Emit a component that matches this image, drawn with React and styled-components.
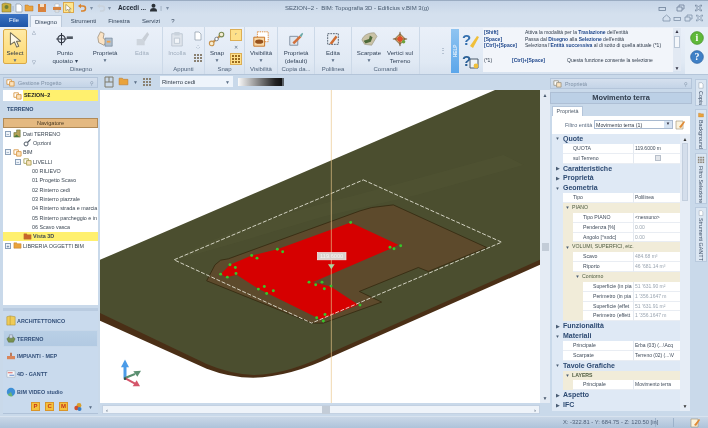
import React from 'react';
import styled, { createGlobalStyle } from 'styled-components';

const GlobalStyle = createGlobalStyle`
  html, body { margin: 0; padding: 0; background: #c9d9ea; }
`;

const sans = '"Liberation Sans", Arial, sans-serif';

const Root = styled.div`
  width: 708px;
  height: 428px;
  overflow: hidden;
  display: flex;
  flex-direction: column;
  background: #c9d9ea;
  color: #33455c;
  font-family: ${sans};
  filter: blur(0.3px);
`;

/* ---------- title bar ---------- */
const TitleBar = styled.div`
  height: 14px;
  flex: none;
  display: flex;
  align-items: center;
  background: linear-gradient(#c6d5e7, #d4e0ee);
  border-top: 1px solid #9aacc2;
  box-sizing: border-box;
`;
const QuickAccess = styled.div`
  width: 285px;
  flex: none;
  display: flex;
  align-items: center;
  padding-left: 1px;
  box-sizing: border-box;
`;
const QuickSlot = styled.span`
  width: ${({ $w }) => $w || 10}px;
  margin-left: ${({ $ml }) => $ml || 0}px;
  height: 11px;
  flex: none;
  display: flex;
  align-items: center;
  justify-content: center;
  font-size: 6px;
  color: #7d8fa5;
  background: ${({ $on }) => ($on ? '#ffe68e' : 'transparent')};
  border: ${({ $on }) => ($on ? '1px solid #dca94c' : 'none')};
  box-sizing: border-box;
`;
const AccountName = styled.span`
  width: 30px;
  flex: none;
  font-size: 6.4px;
  font-weight: 700;
  color: #1b2430;
  margin-left: 6px;
  white-space: nowrap;
`;
const WindowTitle = styled.div`
  width: 139px;
  flex: none;
  font-size: 6px;
  color: #46596f;
  white-space: pre;
`;
const WindowButtons = styled.div`
  margin-left: auto;
  display: flex;
  gap: 9px;
  padding-right: 5px;
  color: #6f8299;
`;

/* ---------- tabs ---------- */
const TabRow = styled.div`
  height: 13px;
  flex: none;
  display: flex;
  align-items: flex-end;
  background: #d4e0ee;
`;
const FileTab = styled.div`
  width: 28px;
  height: 13px;
  background: linear-gradient(#3a73c4, #1f55a6);
  color: #f4f8ff;
  font-size: 6.2px;
  line-height: 12px;
  text-align: center;
  margin-right: 2px;
`;
const Tab = styled.div`
  width: ${({ $w }) => $w}px;
  height: 12px;
  line-height: 12px;
  font-size: 6px;
  text-align: center;
  color: #33445a;
  background: ${({ $active }) => ($active ? '#eef3fa' : 'transparent')};
  border: ${({ $active }) => ($active ? '1px solid #bccadb' : 'none')};
  border-bottom: none;
  box-sizing: border-box;
`;
const TabTools = styled.div`
  margin-left: auto;
  align-self: flex-start;
  display: flex;
  gap: 2px;
  padding-right: 4px;
  color: #7f92a8;
`;

/* ---------- ribbon ---------- */
const Ribbon = styled.div`
  height: 48px;
  flex: none;
  display: flex;
  background: linear-gradient(#eaf0f9, #e0e9f4 75%, #d7e2ef);
  border-bottom: 1px solid #b4c5d9;
  box-sizing: border-box;
`;
const Group = styled.div`
  width: ${({ $w }) => $w}px;
  flex: none;
  display: flex;
  flex-direction: column;
  border-right: 1px solid #ccd9e8;
  box-sizing: border-box;
`;
const GroupBody = styled.div`
  height: 38px;
  flex: none;
  display: flex;
  align-items: flex-start;
  padding-top: 2px;
  box-sizing: border-box;
`;
const GroupLabel = styled.div`
  height: 9px;
  line-height: 9px;
  font-size: 6px;
  text-align: center;
  color: #4f6279;
  white-space: nowrap;
`;
const RibbonButton = styled.div`
  width: ${({ $w }) => $w}px;
  flex: none;
  display: flex;
  flex-direction: column;
  align-items: center;
  font-size: 6.1px;
  line-height: 8px;
  text-align: center;
  color: ${({ $off }) => ($off ? '#9fadbd' : '#33445a')};
  white-space: nowrap;
  box-sizing: border-box;
`;
const IconBox = styled.div`
  height: ${({ $h }) => $h || 20}px;
  flex: none;
  display: flex;
  align-items: center;
  justify-content: center;
`;
const SelectButton = styled(RibbonButton)`
  height: 35px;
  margin-left: 3px;
  background: linear-gradient(#ffeaa5, #fdd870);
  border: 1px solid #d9a948;
  border-radius: 2px;
  color: #2a3444;
`;
const Caret = styled.span`
  font-size: 5px;
  line-height: 6px;
  color: #5b6f87;
`;
const SmallColumn = styled.div`
  width: ${({ $w }) => $w}px;
  flex: none;
  height: 36px;
  display: flex;
  flex-direction: column;
  align-items: center;
  justify-content: ${({ $spread }) => ($spread ? 'space-between' : 'space-around')};
`;
const ToggleButton = styled.span`
  width: 12px;
  height: 12px;
  display: flex;
  align-items: center;
  justify-content: center;
  background: ${({ $on }) => ($on ? '#fee08a' : 'transparent')};
  border: 1px solid ${({ $on }) => ($on ? '#dcae55' : 'transparent')};
  box-sizing: border-box;
`;
const RibbonGap = styled.div`
  width: 31px;
  flex: none;
  display: flex;
  align-items: center;
  justify-content: flex-end;
  padding-right: 4px;
  box-sizing: border-box;
  color: #7d8fa5;
  font-size: 8px;
`;
const HelpStrip = styled.div`
  width: 8px;
  flex: none;
  margin: 2px 0 1px;
  background: linear-gradient(#5ba6ea, #8fc4f1);
  color: #dcecfb;
  font-size: 4.6px;
  font-weight: 700;
  writing-mode: vertical-rl;
  transform: rotate(180deg);
  display: flex;
  align-items: center;
  justify-content: center;
`;
const HelpIcons = styled.div`
  width: 24px;
  flex: none;
  display: flex;
  flex-direction: column;
  align-items: center;
  justify-content: space-around;
  padding: 3px 0;
  box-sizing: border-box;
`;
const HelpBox = styled.div`
  width: 190px;
  flex: none;
  margin-top: 1px;
  height: 44px;
  overflow: hidden;
  background: #f2f5fa;
  font-size: 5px;
  line-height: 6.5px;
  color: #2f3b4b;
  padding: 1px 0 0 1px;
  box-sizing: border-box;
`;
const HelpRow = styled.div`
  display: grid;
  grid-template-columns: ${({ $wide }) => ($wide ? '28px 55px 1fr' : '41px 1fr')};
  margin-bottom: ${({ $gap }) => $gap || 0}px;
`;
const Key = styled.b`
  color: #20488c;
  white-space: nowrap;
`;
const HelpScroll = styled.div`
  width: 8px;
  flex: none;
  margin: 1px 0 3px;
  background: #e2e9f3;
  display: flex;
  flex-direction: column;
  align-items: center;
  justify-content: space-between;
  font-size: 5px;
  color: #334;
`;
const HelpThumb = styled.span`
  width: 6px;
  height: 12px;
  background: #f4f7fb;
  border: 1px solid #b9c6d6;
  box-sizing: border-box;
  margin-bottom: auto;
  margin-top: 2px;
`;
const InfoPanel = styled.div`
  flex: 1;
  display: flex;
  flex-direction: column;
  align-items: center;
  gap: 5px;
  padding-top: 4px;
  margin-left: 4px;
  background: #e9f0f8;
`;

/* ---------- workspace ---------- */
const Workspace = styled.div`
  flex: 1;
  min-height: 0;
  display: flex;
`;
const LeftPanel = styled.div`
  width: 100px;
  flex: none;
  display: flex;
  flex-direction: column;
  padding: 2px 2px 2px 3px;
  box-sizing: border-box;
`;
const DockHeader = styled.div`
  height: 11px;
  flex: none;
  display: flex;
  align-items: center;
  gap: 3px;
  font-size: 5.4px;
  color: #7e90a5;
  background: linear-gradient(#d5e0ee, #c4d4e7);
  border: 1px solid #b4c5da;
  box-sizing: border-box;
  padding: 0 3px 0 2px;
  span:last-child { margin-left: auto; }
`;
const ProjectRow = styled.div`
  height: 11px;
  margin-top: 2px;
  flex: none;
  display: flex;
  background: #ffffff;
`;
const ProjectIcon = styled.div`
  width: 20px;
  display: flex;
  justify-content: flex-end;
  align-items: center;
  padding-right: 1px;
  box-sizing: border-box;
`;
const ProjectName = styled.div`
  flex: 1;
  background: #fff06e;
  font-size: 5.4px;
  font-weight: 700;
  line-height: 11px;
  color: #222;
  padding-left: 1px;
`;
const ModeTitle = styled.div`
  height: 17px;
  flex: none;
  line-height: 17px;
  padding-left: 4px;
  font-size: 5.4px;
  font-weight: 700;
  color: #2e4a70;
`;
const NavigatorBar = styled.div`
  height: 10px;
  flex: none;
  line-height: 9px;
  text-align: center;
  font-size: 5.6px;
  color: #4a3a22;
  background: #e4b981;
  border: 1px solid #b08a58;
  box-sizing: border-box;
`;
const Tree = styled.div`
  height: 177px;
  flex: none;
  background: #ffffff;
  padding-top: 1px;
  box-sizing: border-box;
  overflow: hidden;
`;
const TreeRow = styled.div`
  height: 9.33px;
  display: flex;
  align-items: center;
  gap: 1px;
  padding-left: ${({ $indent }) => $indent}px;
  font-size: 5.4px;
  white-space: nowrap;
  color: #3d4854;
  background: ${({ $selected }) => ($selected ? '#fff06e' : 'transparent')};
  font-weight: ${({ $selected }) => ($selected ? 700 : 400)};
  svg { flex: none; }
`;
const Expander = styled.span`
  width: 6px;
  height: 6px;
  flex: none;
  margin-right: 1px;
  border: 1px solid #8ba0b8;
  background: #eef3f9;
  box-sizing: border-box;
  font-size: 5px;
  line-height: 4px;
  text-align: center;
  color: #3c5a80;
`;
const ModuleList = styled.div`
  flex: 1;
  margin-top: 3px;
  border-top: 3px solid #b9cbe0;
  border-bottom: 1px solid #b0c2d8;
  background: #c9daed;
  display: flex;
  flex-direction: column;
  padding-top: 1px;
  box-sizing: border-box;
`;
const ModuleRow = styled.div`
  height: 17.7px;
  flex: none;
  display: flex;
  align-items: center;
  gap: 1px;
  padding-left: 3px;
  font-size: 5.4px;
  font-weight: 700;
  color: #33507a;
  white-space: nowrap;
  background: ${({ $active }) => ($active ? 'linear-gradient(#bad0e6, #b1c9e2)' : 'transparent')};
  box-shadow: ${({ $active }) => ($active ? 'inset 0 0 0 1px #c7d8ea' : 'none')};
`;
const ModuleTools = styled.div`
  flex: 1;
  display: flex;
  align-items: center;
  justify-content: flex-end;
  gap: 5px;
  padding-right: 5px;
`;
const MiniBadge = styled.span`
  width: 9px;
  height: 9px;
  background: #f3c13c;
  border: 1px solid #d9952a;
  box-sizing: border-box;
  color: #c5341c;
  font-size: 6px;
  font-weight: 700;
  line-height: 7px;
  text-align: center;
`;

/* ---------- centre ---------- */
const CenterColumn = styled.div`
  width: 450px;
  flex: none;
  display: flex;
  flex-direction: column;
`;
const ViewToolbar = styled.div`
  height: 15px;
  flex: none;
  display: flex;
  align-items: center;
  padding: 0 0 2px 4px;
  box-sizing: border-box;
  gap: 4px;
  background: #c9d9ea;
`;
const LayerCombo = styled.div`
  width: 73px;
  height: 11px;
  margin-left: 4px;
  flex: none;
  display: flex;
  align-items: center;
  justify-content: space-between;
  padding: 0 3px 0 2px;
  box-sizing: border-box;
  background: #eef4fb;
  font-size: 5.9px;
  color: #2f3a48;
`;
const Shade = styled.div`
  width: 44px;
  height: 8px;
  margin-left: 1px;
  flex: none;
  background: linear-gradient(90deg, #fafafa, #b0b0b0 30%, #222 85%, #111);
  border-right: 2px solid #5a6066;
`;
const ViewRow = styled.div`
  height: 313px;
  flex: none;
  display: flex;
`;
const Viewport = styled.div`
  width: 440px;
  flex: none;
  background: #ffffff;
  svg { display: block; }
`;
const VScroll = styled.div`
  flex: 1;
  background: #e4ebf4;
  display: flex;
  flex-direction: column;
  align-items: center;
  justify-content: space-between;
  font-size: 5px;
  color: #46576b;
  padding: 2px 0;
  box-sizing: border-box;
`;
const ScrollThumb = styled.span`
  width: 7px;
  height: 8px;
  background: #c3ccd7;
`;
const HScrollTrack = styled.div`
  height: 13px;
  flex: none;
  padding: 2px 10px 2px 2px;
  box-sizing: border-box;
`;
const HScroll = styled.div`
  height: 100%;
  background: #eef3f9;
  border: 1px solid #c3d1e2;
  box-sizing: border-box;
  display: flex;
  align-items: center;
  justify-content: space-between;
  padding: 0 3px;
  font-size: 6px;
  color: #46576b;
`;
const HThumb = styled.span`
  width: 8px;
  height: 8px;
  background: #c3ccd7;
  margin-left: 10px;
`;

/* ---------- properties ---------- */
const RightPanel = styled.div`
  width: 142px;
  flex: none;
  display: flex;
  flex-direction: column;
  padding-top: 3px;
  box-sizing: border-box;
`;
const PanelTitle = styled.div`
  height: 12px;
  margin: 3px 0 2px;
  flex: none;
  text-align: center;
  font-size: 7.4px;
  font-weight: 700;
  color: #2f3b4b;
  background: #bcd0e6;
  border: 1px solid #aebfd5;
  box-sizing: border-box;
  line-height: 10px;
`;
const PropTab = styled.div`
  width: 31px;
  height: 10px;
  flex: none;
  margin-left: 2px;
  background: #ffffff;
  border: 1px solid #b4c5da;
  border-bottom: none;
  box-sizing: border-box;
  font-size: 5.4px;
  line-height: 9px;
  text-align: center;
  color: #4f5c6b;
`;
const FilterRow = styled.div`
  height: 18px;
  flex: none;
  margin: 0 2px;
  background: #ffffff;
  display: flex;
  align-items: center;
  font-size: 5.5px;
  color: #5a6b80;
  padding: 0 0 1px 13px;
  box-sizing: border-box;
  gap: 2px;
  white-space: nowrap;
`;
const FilterLabel = styled.span`
  width: 27px;
  flex: none;
`;
const FilterCombo = styled.div`
  width: 79px;
  height: 9px;
  flex: none;
  display: flex;
  align-items: center;
  justify-content: space-between;
  border: 1px solid #a9bad0;
  box-sizing: border-box;
  font-size: 5.3px;
  color: #2f3a48;
  padding-left: 1px;
`;
const ComboArrow = styled.span`
  width: 8px;
  height: 7px;
  background: #d6e3f2;
  color: #334;
  text-align: center;
  font-size: 4.5px;
  line-height: 6px;
`;
const GridWrap = styled.div`
  height: 277px;
  flex: none;
  margin: 0 2px;
  display: flex;
  background: #dfe9f5;
`;
const PropGrid = styled.div`
  width: 128px;
  flex: none;
`;
const GridRow = styled.div`
  height: 9.87px;
  display: flex;
  align-items: stretch;
  overflow: hidden;
  white-space: nowrap;
`;
const Gutter = styled.span`
  width: ${({ $w }) => $w}px;
  flex: none;
  display: flex;
  align-items: center;
  justify-content: center;
  font-size: 4.5px;
  color: #4a5d74;
  background: ${({ $beige }) => ($beige ? '#f1ecd9' : 'transparent')};
`;
const SectionName = styled.span`
  font-size: 7px;
  font-weight: 700;
  line-height: 9.5px;
  color: #2d4a72;
`;
const SubName = styled.span`
  flex: 1;
  background: #f1ecd9;
  font-size: 5.2px;
  line-height: 9.5px;
  color: #4c5a3f;
  font-weight: ${({ $bold }) => ($bold ? 700 : 400)};
`;
const NameCell = styled.span`
  flex: 1;
  min-width: 0;
  background: #ffffff;
  border-bottom: 1px solid #e9edf3;
  padding-left: 10px;
  box-sizing: border-box;
  font-size: 5.2px;
  line-height: 9px;
  color: #3f4b5a;
`;
const ValueCell = styled.span`
  width: 47px;
  flex: none;
  background: #ffffff;
  border-bottom: 1px solid #e9edf3;
  border-left: 1px solid #e4e9f0;
  box-sizing: border-box;
  padding-left: 1px;
  font-size: 5px;
  line-height: 9px;
  color: ${({ $muted }) => ($muted ? '#9aa5b1' : '#3f4b5a')};
  display: flex;
  justify-content: ${({ $center }) => ($center ? 'center' : 'flex-start')};
  align-items: center;
`;
const CheckBox = styled.span`
  width: 6px;
  height: 6px;
  background: #e3e6ea;
  border: 1px solid #b7bfca;
  box-sizing: border-box;
`;
const GridScroll = styled.div`
  flex: 1;
  background: #e6edf6;
  display: flex;
  flex-direction: column;
  align-items: center;
  padding: 2px 0;
  box-sizing: border-box;
  font-size: 5px;
  color: #333;
`;
const GridThumb = styled.span`
  width: 6px;
  height: 58px;
  margin-top: 1px;
  margin-bottom: auto;
  background: #d4deeb;
  border: 1px solid #c3cfde;
  box-sizing: border-box;
`;

/* ---------- side tabs ---------- */
const SideTabs = styled.div`
  flex: 1;
  display: flex;
  flex-direction: column;
  align-items: flex-end;
  padding: 4px 1px 0 0;
  box-sizing: border-box;
  gap: 3px;
`;
const SideTab = styled.div`
  width: 12px;
  height: ${({ $h }) => $h}px;
  flex: none;
  display: flex;
  flex-direction: column;
  align-items: center;
  gap: 2px;
  padding-top: 2px;
  box-sizing: border-box;
  background: #dbe6f2;
  border: 1px solid #b9cade;
  font-size: 5.4px;
  color: #3f5068;
`;
const SideText = styled.span`
  writing-mode: vertical-rl;
  white-space: nowrap;
`;

/* ---------- status bar ---------- */
const StatusBar = styled.div`
  height: 12px;
  flex: none;
  display: flex;
  align-items: center;
  background: linear-gradient(#c9d7e7, #aec3da);
  border-top: 1px solid #d8e3ef;
  box-sizing: border-box;
  padding-left: 563px;
  font-size: 5.8px;
  color: #4f6078;
`;
const StatusCell = styled.span`
  width: ${({ $w }) => $w}px;
  flex: none;
  white-space: nowrap;
  border-right: 1px solid #9db2ca;
  height: 9px;
  line-height: 9px;
`;
const StatusIcon = styled.span`
  margin-left: 16px;
  display: flex;
`;

/* ---------- drawings ---------- */
const Page = ({ size = 10 }) => (
  <svg width={size} height={size} viewBox="0 0 10 10">
    <path d="M2 1h4l2 2v6H2z" fill="#fff" stroke="#8b99a8" strokeWidth=".7" />
  </svg>
);
const Folder = ({ size = 10, fill = '#e9a33c' }) => (
  <svg width={size} height={size} viewBox="0 0 10 10">
    <path d="M1 2h3l1 1h4v5H1z" fill={fill} stroke="#b9772a" strokeWidth=".5" />
  </svg>
);
const Save = () => (
  <svg width="10" height="10" viewBox="0 0 10 10">
    <path d="M1 1h8v8H1z" fill="#d9823c" />
    <path d="M3 1h4v3H3z" fill="#f6dfc4" />
  </svg>
);
const Printer = () => (
  <svg width="10" height="10" viewBox="0 0 10 10">
    <path d="M3 1h4v3H3z" fill="#fff" stroke="#999" strokeWidth=".4" />
    <path d="M1 4h8v3H1z" fill="#d9823c" />
    <path d="M3 7h4v2H3z" fill="#eee" stroke="#999" strokeWidth=".4" />
  </svg>
);
const Pointer = ({ size = 10, fill = '#fff', stroke = '#7a6c4c' }) => (
  <svg width={size} height={size} viewBox="0 0 10 10">
    <path d="M2 1l6 5H5.6l1.3 3-1.2.5L4.4 6.4 2 8z" fill={fill} stroke={stroke} strokeWidth=".6" strokeLinejoin="round" />
  </svg>
);
const Undo = ({ color = '#d9822b' }) => (
  <svg width="10" height="10" viewBox="0 0 10 10">
    <path d="M3 3h3a2.4 2.4 0 010 5H4" fill="none" stroke={color} strokeWidth="1.5" />
    <path d="M4 .8v4.4L1 3z" fill={color} />
  </svg>
);
const Person = () => (
  <svg width="9" height="9" viewBox="0 0 10 10">
    <circle cx="5" cy="3" r="2.2" fill="#2c3238" />
    <path d="M1 9.5c0-3 1.5-4 4-4s4 1 4 4z" fill="#2c3238" />
  </svg>
);
const WinGlyph = ({ kind }) => (
  <svg width="9" height="8" viewBox="0 0 9 8" fill="none" stroke="currentColor" strokeWidth=".8">
    {kind === 'min' && <rect x="1" y="3.5" width="6.5" height="3" />}
    {kind === 'max' && <path d="M1 3h5v4H1zM3 3V1h5v4H6" />}
    {kind === 'close' && <path d="M1.5 1h1l2 2 2-2h1v1l-2 2 2 2v1h-1l-2-2-2 2h-1V6l2-2-2-2z" />}
    {kind === 'home' && <path d="M1 4l3.5-3L8 4v3H1z" />}
  </svg>
);
const Gem = () => (
  <svg width="11" height="11" viewBox="0 0 11 11">
    <path d="M1 2l3-1 6 1v8H1z" fill="#c9ae3e" stroke="#7f6f2a" strokeWidth=".5" />
    <circle cx="5.5" cy="5" r="2" fill="#6a7f3a" />
  </svg>
);
const PuntoIcon = () => (
  <svg width="22" height="14" viewBox="0 0 22 16">
    <circle cx="7" cy="8" r="4.2" fill="none" stroke="#2e3440" strokeWidth="1.2" />
    <path d="M7 1v14M1 8h12" stroke="#2e3440" strokeWidth="1.2" />
    <path d="M13 5h7v3h-7z" fill="#4e5661" />
  </svg>
);
const ProprietaIcon = () => (
  <svg width="18" height="18" viewBox="0 0 20 20">
    <path d="M5 2l4 2-1 5 4 3-3 5-6-3-1-6z" fill="#fbe3c4" stroke="#8b7a64" strokeWidth=".7" />
    <path d="M10 9h8v9h-8z" fill="#aebecd" stroke="#6d7f93" strokeWidth=".7" />
    <path d="M12 12h4v2h-4z" fill="#f2a24a" />
  </svg>
);
const BrushIcon = ({ tone = '#c8ced6' }) => (
  <svg width="16" height="16" viewBox="0 0 18 18">
    <path d="M15 1L9 9l3 3 5-8z" fill={tone} />
    <path d="M3 9h6l3 3v4H3z" fill={tone} opacity=".8" />
  </svg>
);
const ClipIcon = () => (
  <svg width="14" height="16" viewBox="0 0 16 18">
    <path d="M2 3h12v14H2z" fill="#dfe5ec" stroke="#bcc6d1" />
    <path d="M5 1h6v4H5z" fill="#c9d2dc" />
    <path d="M5 8h6v6H5z" fill="#f2f5f9" stroke="#bcc6d1" />
  </svg>
);
const SnapIcon = () => (
  <svg width="18" height="16" viewBox="0 0 20 18" fill="none">
    <path d="M4 14L15 4" stroke="#c8924a" strokeWidth="2.4" />
    <circle cx="15" cy="4" r="2.6" stroke="#7b8a52" strokeWidth="1.2" fill="#f5ecd2" />
    <circle cx="4" cy="14" r="2.6" stroke="#c8924a" strokeWidth="1.2" fill="#f5ecd2" />
    <circle cx="9.5" cy="9" r="2" stroke="#6a7785" strokeWidth="1" fill="#fff" />
  </svg>
);
const VisibilityIcon = () => (
  <svg width="18" height="18" viewBox="0 0 20 20">
    <path d="M6 2h12v11H6z" fill="#fff" stroke="#e0862f" strokeDasharray="1.5 1" />
    <path d="M2 8h12v10H2z" fill="#f9d9a6" stroke="#c46d1d" />
    <ellipse cx="8" cy="13" rx="4.5" ry="2.4" fill="#96511c" />
  </svg>
);
const DefaultIcon = () => (
  <svg width="16" height="16" viewBox="0 0 18 18">
    <path d="M2 6h9v10H2z" fill="#dfe6ee" stroke="#7a8a9c" />
    <path d="M5 13l8-8 2 2-8 8z" fill="#d2703b" />
    <path d="M13 5l3-3 1 1-2 4z" fill="#69a8a6" />
  </svg>
);
const PolyIcon = () => (
  <svg width="16" height="16" viewBox="0 0 18 18">
    <path d="M3 3h12v12H3z" fill="#e8eef5" stroke="#465362" strokeDasharray="2 1" />
    <path d="M5 14l7-9 2 2-6 8z" fill="#cf6d32" />
  </svg>
);
const SlopeIcon = () => (
  <svg width="18" height="16" viewBox="0 0 20 18">
    <path d="M2 10c2-6 8-8 14-8l3 4-6 10-8-1z" fill="#c9c2a6" stroke="#8f8a75" strokeWidth=".6" />
    <path d="M4 11l6-2 1-4 3 2-2 5-6 2z" fill="#4d6a3a" />
  </svg>
);
const VertexIcon = () => (
  <svg width="16" height="16" viewBox="0 0 18 18">
    <path d="M3 9l6-6 6 6-6 6z" fill="#d7b075" stroke="#7e5d2f" />
    <path d="M9 1v16M1 9h16" stroke="#6a4a20" strokeWidth="1" />
    <circle cx="9" cy="9" r="3" fill="#e24d2b" />
    <circle cx="13" cy="12" r="2" fill="#6da33c" />
  </svg>
);
const QuestionPen = () => (
  <svg width="18" height="16" viewBox="0 0 18 16">
    <text x="0" y="13" fontFamily="Liberation Sans" fontWeight="700" fontSize="15" fill="#336fae">?</text>
    <path d="M8 14l7-10 2 1-6 11z" fill="#f0bf3a" />
  </svg>
);
const QuestionBox = () => (
  <svg width="18" height="16" viewBox="0 0 18 16">
    <path d="M8 6h8v9H8z" fill="#eef2f6" stroke="#4b5a6a" />
    <text x="0" y="13" fontFamily="Liberation Sans" fontWeight="700" fontSize="15" fill="#2a5f96">?</text>
    <circle cx="14" cy="13" r="2.4" fill="#f0bf3a" />
  </svg>
);
const Orb = ({ color, dark, mark }) => (
  <svg width="14" height="14" viewBox="0 0 14 14">
    <circle cx="7" cy="7" r="6.4" fill={color} stroke={dark} strokeWidth=".6" />
    <text x="7" y="10.4" textAnchor="middle" fontFamily="Liberation Serif" fontWeight="700" fontSize="10" fill="#fff">{mark}</text>
  </svg>
);
const NodeIcon = ({ tone = '#d99a4a' }) => (
  <svg width="9" height="9" viewBox="0 0 10 10">
    <path d="M1 2h5v5H1z" fill="#fff" stroke={tone} />
    <path d="M4 4h5v5H4z" fill="#fbe2bd" stroke={tone} />
  </svg>
);
const TerrainIcon = () => (
  <svg width="9" height="9" viewBox="0 0 10 10">
    <path d="M1 9V4h3V1h4v8z" fill="#b6a257" stroke="#5c6b32" strokeWidth=".6" />
    <path d="M1 9l3-3 3 3z" fill="#4d7a3a" />
  </svg>
);
const GearIcon = () => (
  <svg width="9" height="9" viewBox="0 0 10 10">
    <circle cx="3.4" cy="6.6" r="2.2" fill="none" stroke="#505a66" strokeWidth="1.1" />
    <path d="M5 5l3.4-3.4" stroke="#505a66" strokeWidth="1.3" />
  </svg>
);
const BookIcon = () => (
  <svg width="10" height="11" viewBox="0 0 12 13">
    <path d="M1 2l4-1 6 1v10H1z" fill="#efcb58" stroke="#a98a2a" strokeWidth=".6" />
    <path d="M5 1v11" stroke="#a98a2a" strokeWidth=".6" />
  </svg>
);
const SiteIcon = () => (
  <svg width="10" height="9" viewBox="0 0 12 11">
    <path d="M1 6c2-4 8-4 10 0l-2 4H3z" fill="#78914e" stroke="#4a5f35" strokeWidth=".5" />
    <path d="M4 1h4v4H4z" fill="#cfd8e3" stroke="#5e6e80" strokeWidth=".5" />
  </svg>
);
const PipesIcon = () => (
  <svg width="10" height="8" viewBox="0 0 12 10">
    <path d="M1 5h10v4H1z" fill="#d9855a" />
    <path d="M5 1h2v4H5z" fill="#b66238" />
  </svg>
);
const GanttIcon = () => (
  <svg width="10" height="8" viewBox="0 0 12 10">
    <path d="M1 1h10v8H1z" fill="#f4f6f9" stroke="#8a98a8" strokeWidth=".5" />
    <path d="M2 3h6v1H2z" fill="#d9443a" />
    <path d="M4 6h6v1H4z" fill="#3b6fc0" />
  </svg>
);
const GlobeIcon = () => (
  <svg width="10" height="10" viewBox="0 0 12 12">
    <circle cx="6" cy="6" r="5" fill="#3d8fd6" />
    <path d="M2 9a5 5 0 006 2l-2-5z" fill="#7fc14a" opacity=".7" />
  </svg>
);
const ToolDot = () => (
  <svg width="10" height="10" viewBox="0 0 10 10">
    <circle cx="6" cy="3.5" r="2.4" fill="#d9a02c" />
    <circle cx="3.5" cy="6" r="2.2" fill="#d14e2e" />
    <circle cx="6.5" cy="7" r="2" fill="#3b7fc4" />
  </svg>
);
const GridGlyph = ({ color = '#8a8172' }) => (
  <svg width="10" height="10" viewBox="0 0 10 10" fill={color}>
    {[1, 4, 7].map((x) => [1, 4, 7].map((y) => <rect key={`${x}${y}`} x={x} y={y} width="2" height="2" />))}
  </svg>
);
const SplitGlyph = () => (
  <svg width="10" height="12" viewBox="0 0 10 12" fill="none" stroke="#7f7a6a">
    <path d="M1 1h8v10H1zM1 6h8M5 1v5" />
  </svg>
);
const NoteGlyph = () => (
  <svg width="11" height="10" viewBox="0 0 11 10">
    <path d="M1 1h7v8H1z" fill="#fbf3dc" stroke="#9a8e74" strokeWidth=".6" />
    <path d="M4 7l5-6 1 1-4 6z" fill="#e08a35" />
  </svg>
);

const dots = [
  [782, 413], [932, 483], [900, 487], [912, 492], [420, 540], [436, 548], [392, 568], [412, 577], [438, 566],
  [485, 512], [501, 520], [562, 493], [578, 501], [657, 592], [677, 600], [696, 592], [723, 604], [703, 612],
  [505, 613], [523, 605], [530, 626], [550, 618], [680, 699], [705, 689], [700, 709], [810, 661],
];

// coordinates are in the 3x crop of the reference, the viewBox scales them back down
const TerrainScene = () => (
  <svg width="440" height="313" viewBox="30 15 1320 940" preserveAspectRatio="none">
    <path
      d="M30 708 L350 852 Q420 879 490 879 Q600 877 730 814 L1350 540 L1350 500 L30 660 Z"
      fill="#4a2f16"
    />
    <path
      d="M30 525 L1215 15 L1350 15 L1350 525 L730 800 Q600 868 490 871 Q420 868 350 838 L30 685 Z"
      fill="#4b4e2f"
    />
    <path d="M240 530 C400 440 560 390 800 330 L950 290 L1240 210 L1300 240 L980 330 L700 395 L450 470 Z" fill="#5a5e3a" opacity=".22" />
    <path
      d="M350 588 L375 540 L392 526 L415 522 L810 378 L845 368 L910 360 L1190 488 L1015 560 L985 548 L808 620 L875 652 L700 715 L665 715 Z"
      fill="#5d4a2c"
      stroke="#33280f"
      strokeWidth="2.4"
      strokeLinejoin="round"
    />
    <path
      d="M782 413 L925 480 L905 490 L668 592 L722 605 L805 660 L690 705 L680 698 L505 612 L440 570 L410 577 L392 568 L420 540 L485 512 L562 493 Z"
      fill="#d60000"
    />
    <path
      d="M820 285 L1235 472 L665 715 L252 525 Z"
      fill="none"
      stroke="#e7e6d8"
      strokeWidth="2.6"
      strokeDasharray="12 5"
    />
    <path d="M724 15 V955" stroke="#e8c48a" strokeWidth="2" />
    {dots.map(([cx, cy]) => (
      <circle key={`${cx}-${cy}`} cx={cx} cy={cy} r="4.4" fill="#37c62b" />
    ))}
    <path d="M714 538 H734 L724 553 Z" fill="#a7d6a0" />
    <rect x="682" y="503" width="86" height="22" fill="#d8d2ce" stroke="#f2efec" strokeWidth="2" />
    <text x="725" y="520" textAnchor="middle" fontFamily="Liberation Sans" fontSize="17" fill="#f7f4f1">119.6000</text>
    <path d="M105 880 V838" stroke="#4a9be8" strokeWidth="9" />
    <path d="M93 848 L105 824 L117 848 Z" fill="#4a9be8" />
    <path d="M105 880 L135 868" stroke="#5a8f70" strokeWidth="6" />
    <path d="M130 860 L153 858 L142 876 Z" fill="#5a8f70" />
    <path d="M105 880 L135 897" stroke="#d4556a" strokeWidth="6" />
    <path d="M128 905 L150 905 L140 887 Z" fill="#d4556a" />
    <circle cx="105" cy="882" r="4" fill="#33564c" />
  </svg>
);

// names and values are cut where the grid columns cut them on screen
const rows = [
  { type: 'section', name: 'Quote', open: true },
  { level: 1, name: 'QUOTA', value: '119.6000 m' },
  { level: 1, name: 'sul Terreno', check: true },
  { type: 'section', name: 'Caratteristiche' },
  { type: 'section', name: 'Proprietà' },
  { type: 'section', name: 'Geometria', open: true },
  { level: 1, name: 'Tipo', value: 'Polilinea' },
  { type: 'sub', level: 1, name: 'PIANO' },
  { level: 2, name: 'Tipo PIANO', value: '<nessuno>' },
  { level: 2, name: 'Pendenza  [%]', value: '0.00', muted: true },
  { level: 2, name: 'Angolo  [°sxdc]', value: '0.00', muted: true },
  { type: 'sub', level: 1, name: 'VOLUMI, SUPERFICI, etc.' },
  { level: 2, name: 'Scavo', value: '484.68 m³', muted: true },
  { level: 2, name: 'Riporto', value: "46 '681.14 m³", muted: true },
  { type: 'sub', level: 2, name: 'Contorno' },
  { level: 3, name: 'Superficie (in pia', value: "51 '631.90 m²", muted: true },
  { level: 3, name: 'Perimetro (in pia', value: "1 '356.1647 m", muted: true },
  { level: 3, name: 'Superficie (effet', value: "51 '631.91 m²", muted: true },
  { level: 3, name: 'Perimetro (effett', value: "1 '356.1647 m", muted: true },
  { type: 'section', name: 'Funzionalità' },
  { type: 'section', name: 'Materiali', open: true },
  { level: 1, name: 'Principale', value: 'Erba (03)  (...\\Acq' },
  { level: 1, name: 'Scarpate', value: 'Terreno (02)  (...\\V' },
  { type: 'section', name: 'Tavole Grafiche', open: true },
  { type: 'sub', level: 1, name: 'LAYERS', bold: true },
  { level: 2, name: 'Principale', value: 'Movimento terra' },
  { type: 'section', name: 'Aspetto' },
  { type: 'section', name: 'IFC' },
];

const PropRow = ({ row }) => {
  if (row.type === 'section') {
    return (
      <GridRow>
        <Gutter $w={11}>{row.open ? '▼' : '▶'}</Gutter>
        <SectionName>{row.name}</SectionName>
      </GridRow>
    );
  }
  const nest = (row.level - 1) * 10;
  if (row.type === 'sub') {
    return (
      <GridRow>
        <Gutter $w={11} />
        {nest > 0 && <Gutter $w={nest} $beige />}
        <Gutter $w={9} $beige>▼</Gutter>
        <SubName $bold={row.bold}>{row.name}</SubName>
      </GridRow>
    );
  }
  return (
    <GridRow>
      <Gutter $w={11} />
      {nest > 0 && <Gutter $w={nest} $beige />}
      <NameCell>{row.name}</NameCell>
      <ValueCell $muted={row.muted} $center={row.check}>
        {row.check ? <CheckBox /> : row.value}
      </ValueCell>
    </GridRow>
  );
};

const levels = [
  '00 RILIEVO',
  '01 Progetto Scavo',
  '02 Rinterro cedi',
  '03 Rinterro piazzale',
  '04 Rinterro strada e marcia',
  '05 Rinterro parcheggio e in',
  '06 Scavo vasca',
];

const App = () => (
  <>
    <GlobalStyle />
    <Root>
      <TitleBar>
        <QuickAccess>
          <QuickSlot $w={11}><Gem /></QuickSlot>
          <QuickSlot $w={2}>|</QuickSlot>
          <QuickSlot><Page /></QuickSlot>
          <QuickSlot><Folder /></QuickSlot>
          <QuickSlot $ml={3}><Save /></QuickSlot>
          <QuickSlot $ml={5}><Printer /></QuickSlot>
          <QuickSlot $on $w={11} $ml={1}><Pointer /></QuickSlot>
          <QuickSlot $ml={3}><Undo /></QuickSlot>
          <QuickSlot $w={9}>▾</QuickSlot>
          <QuickSlot><Undo color="#c9d2dc" /></QuickSlot>
          <QuickSlot $w={6}>▾</QuickSlot>
          <AccountName>Accedi ...</AccountName>
          <QuickSlot><Person /></QuickSlot>
          <QuickSlot $w={6}>|</QuickSlot>
          <QuickSlot $w={6}>▾</QuickSlot>
        </QuickAccess>
        <WindowTitle>{'SEZION~2 -  BIM: Topografia 3D - Edificius v.BIM 3(g)'}</WindowTitle>
        <WindowButtons>
          <WinGlyph kind="min" />
          <WinGlyph kind="max" />
          <WinGlyph kind="close" />
        </WindowButtons>
      </TitleBar>

      <TabRow>
        <FileTab>File</FileTab>
        <Tab $w={32} $active>Disegno</Tab>
        <Tab $w={43}>Strumenti</Tab>
        <Tab $w={28}>Finestra</Tab>
        <Tab $w={36}>Servizi</Tab>
        <Tab $w={8}>?</Tab>
        <TabTools>
          <WinGlyph kind="home" />
          <WinGlyph kind="min" />
          <WinGlyph kind="max" />
          <WinGlyph kind="close" />
        </TabTools>
      </TabRow>

      <Ribbon>
        <Group $w={163}>
          <GroupBody>
            <SelectButton $w={24}>
              <IconBox $h={19}><Pointer size={17} fill="#fdf8e8" stroke="#6f6a58" /></IconBox>
              Select
              <Caret>▼</Caret>
            </SelectButton>
            <SmallColumn $w={14} $spread>
              <Caret>△</Caret>
              <Caret>▽</Caret>
            </SmallColumn>
            <RibbonButton $w={48}>
              <IconBox><PuntoIcon /></IconBox>
              Punto
              <br />
              quotato ▾
            </RibbonButton>
            <RibbonButton $w={32}>
              <IconBox><ProprietaIcon /></IconBox>
              Proprietà
              <Caret>▼</Caret>
            </RibbonButton>
            <RibbonButton $w={42} $off>
              <IconBox><BrushIcon /></IconBox>
              Edita
            </RibbonButton>
          </GroupBody>
          <GroupLabel>Disegno</GroupLabel>
        </Group>
        <Group $w={42}>
          <GroupBody>
            <RibbonButton $w={28} $off>
              <IconBox><ClipIcon /></IconBox>
              Incolla
            </RibbonButton>
            <SmallColumn $w={13}>
              <Page size={10} />
              <Caret>⁘</Caret>
              <GridGlyph />
            </SmallColumn>
          </GroupBody>
          <GroupLabel>Appunti</GroupLabel>
        </Group>
        <Group $w={40}>
          <GroupBody>
            <RibbonButton $w={24}>
              <IconBox><SnapIcon /></IconBox>
              Snap
              <Caret>▼</Caret>
            </RibbonButton>
            <SmallColumn $w={13}>
              <ToggleButton $on><Caret>⌜</Caret></ToggleButton>
              <ToggleButton><Caret>✕</Caret></ToggleButton>
              <ToggleButton $on><GridGlyph color="#9a6a20" /></ToggleButton>
            </SmallColumn>
          </GroupBody>
          <GroupLabel>Snap</GroupLabel>
        </Group>
        <Group $w={33}>
          <GroupBody>
            <RibbonButton $w={32}>
              <IconBox><VisibilityIcon /></IconBox>
              Visibilità
              <Caret>▼</Caret>
            </RibbonButton>
          </GroupBody>
          <GroupLabel>Visibilità</GroupLabel>
        </Group>
        <Group $w={37}>
          <GroupBody>
            <RibbonButton $w={36}>
              <IconBox><DefaultIcon /></IconBox>
              Proprietà
              <br />
              (default)
            </RibbonButton>
          </GroupBody>
          <GroupLabel>Copia da...</GroupLabel>
        </Group>
        <Group $w={37}>
          <GroupBody>
            <RibbonButton $w={36}>
              <IconBox><PolyIcon /></IconBox>
              Edita
              <Caret>▼</Caret>
            </RibbonButton>
          </GroupBody>
          <GroupLabel>Polilinea</GroupLabel>
        </Group>
        <Group $w={68}>
          <GroupBody>
            <RibbonButton $w={34}>
              <IconBox><SlopeIcon /></IconBox>
              Scarpate
              <Caret>▼</Caret>
            </RibbonButton>
            <RibbonButton $w={28}>
              <IconBox><VertexIcon /></IconBox>
              Vertici sul
              <br />
              Terreno
            </RibbonButton>
          </GroupBody>
          <GroupLabel>Comandi</GroupLabel>
        </Group>
        <RibbonGap>⋮</RibbonGap>
        <HelpStrip>HELP</HelpStrip>
        <HelpIcons>
          <QuestionPen />
          <QuestionBox />
        </HelpIcons>
        <HelpBox>
          <HelpRow>
            <Key>[Shift]</Key>
            <span>Attiva la modalità per la <Key>Traslazione</Key> dell'entità</span>
          </HelpRow>
          <HelpRow>
            <Key>[Space]</Key>
            <span>Passa dal <Key>Disegno</Key> alla <Key>Selezione</Key> dell'entità</span>
          </HelpRow>
          <HelpRow $gap={8.5}>
            <Key>[Ctrl]+[Space]</Key>
            <span>Seleziona l'<Key>Entità successiva</Key> al di sotto di quella attuale (*1)</span>
          </HelpRow>
          <HelpRow $wide>
            <span>(*1)</span>
            <Key>[Ctrl]+[Space]</Key>
            <span>Questa funzione consente la selezione</span>
          </HelpRow>
        </HelpBox>
        <HelpScroll>
          ▲
          <HelpThumb />
          ▼
        </HelpScroll>
        <InfoPanel>
          <Orb color="#5fb83a" dark="#3f8a22" mark="i" />
          <Orb color="#3f80c6" dark="#2b5f9c" mark="?" />
        </InfoPanel>
      </Ribbon>

      <Workspace>
        <LeftPanel>
          <DockHeader>
            <NodeIcon />
            Gestione Progetto
            <span>⚲</span>
          </DockHeader>
          <ProjectRow>
            <ProjectIcon><NodeIcon /></ProjectIcon>
            <ProjectName>SEZION~2</ProjectName>
          </ProjectRow>
          <ModeTitle>TERRENO</ModeTitle>
          <NavigatorBar>Navigatore</NavigatorBar>
          <Tree>
            <TreeRow $indent={2}><Expander>−</Expander><TerrainIcon />Dati TERRENO</TreeRow>
            <TreeRow $indent={20}><GearIcon />Opzioni</TreeRow>
            <TreeRow $indent={2}><Expander>−</Expander><NodeIcon />BIM</TreeRow>
            <TreeRow $indent={12}><Expander>−</Expander><NodeIcon tone="#a8a056" />LIVELLI</TreeRow>
            {levels.map((level) => (
              <TreeRow key={level} $indent={29}>{level}</TreeRow>
            ))}
            <TreeRow $indent={20} $selected><Folder size={9} fill="#c8662c" />Vista 3D</TreeRow>
            <TreeRow $indent={2}><Expander>+</Expander><Folder size={9} />LIBRERIA OGGETTI BIM</TreeRow>
          </Tree>
          <ModuleList>
            <ModuleRow><BookIcon />ARCHITETTONICO</ModuleRow>
            <ModuleRow $active><SiteIcon />TERRENO</ModuleRow>
            <ModuleRow><PipesIcon />IMPIANTI - MEP</ModuleRow>
            <ModuleRow><GanttIcon />4D - GANTT</ModuleRow>
            <ModuleRow><GlobeIcon />BIM VIDEO studio</ModuleRow>
            <ModuleTools>
              <MiniBadge>P</MiniBadge>
              <MiniBadge>C</MiniBadge>
              <MiniBadge>M</MiniBadge>
              <ToolDot />
              <Caret>▼</Caret>
            </ModuleTools>
          </ModuleList>
        </LeftPanel>

        <CenterColumn>
          <ViewToolbar>
            <SplitGlyph />
            <Folder size={11} />
            <Caret>▼</Caret>
            <GridGlyph />
            <LayerCombo>
              Rinterro cedi
              <Caret>▼</Caret>
            </LayerCombo>
            <Shade />
          </ViewToolbar>
          <ViewRow>
            <Viewport>
              <TerrainScene />
            </Viewport>
            <VScroll>
              ▲
              <ScrollThumb />
              ▼
            </VScroll>
          </ViewRow>
          <HScrollTrack>
            <HScroll>
              ‹
              <HThumb />
              ›
            </HScroll>
          </HScrollTrack>
        </CenterColumn>

        <RightPanel>
          <DockHeader>
            <NodeIcon tone="#a09a8a" />
            Proprietà
            <span>⚲</span>
          </DockHeader>
          <PanelTitle>Movimento terra</PanelTitle>
          <PropTab>Proprietà</PropTab>
          <FilterRow>
            <FilterLabel>Filtro entità</FilterLabel>
            <FilterCombo>
              Movimento terra (1)
              <ComboArrow>▼</ComboArrow>
            </FilterCombo>
            <NoteGlyph />
          </FilterRow>
          <GridWrap>
            <PropGrid>
              {rows.map((row, i) => (
                <PropRow key={`${row.name}-${i}`} row={row} />
              ))}
            </PropGrid>
            <GridScroll>
              ▲
              <GridThumb />
              ▼
            </GridScroll>
          </GridWrap>
        </RightPanel>

        <SideTabs>
          <SideTab $h={27}><Page size={8} /><SideText>Copia</SideText></SideTab>
          <SideTab $h={41}><Folder size={8} /><SideText>Background</SideText></SideTab>
          <SideTab $h={51}><GridGlyph /><SideText>Filtro Selezione</SideText></SideTab>
          <SideTab $h={55}><Page size={8} /><SideText>Strumenti GANTT</SideText></SideTab>
        </SideTabs>
      </Workspace>

      <StatusBar>
        <StatusCell $w={92}>X: -322.81 - Y: 684.75 - Z: 120.50 [in]</StatusCell>
        <StatusCell $w={17} />
        <StatusIcon><NoteGlyph /></StatusIcon>
      </StatusBar>
    </Root>
  </>
);

export default App;
